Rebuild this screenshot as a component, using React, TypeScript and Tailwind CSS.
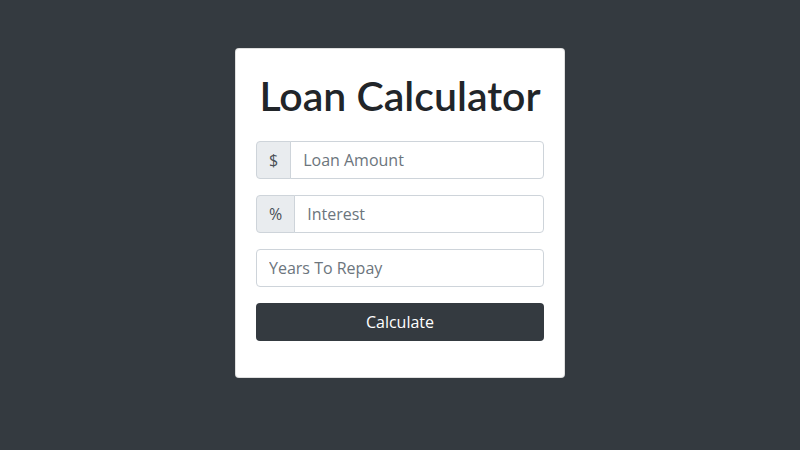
import React from "react";

const font = { fontFamily: '"Open Sans", "Noto Sans", sans-serif' };
const titleFont = { fontFamily: 'Lato, "Open Sans", sans-serif' };

function PrefixedInput({ prefix, placeholder }: { prefix: string; placeholder: string }) {
  return (
    <div className="flex h-[38px] w-full">
      <span className="flex items-center rounded-l-[4px] border border-[#ced4da] bg-[#e9ecef] px-3 text-base text-[#495057]">
        {prefix}
      </span>
      <input
        className="-ml-px min-w-0 flex-1 rounded-r-[4px] border border-[#ced4da] bg-white px-3 text-base text-[#495057] outline-none placeholder:text-[#6c757d]"
        placeholder={placeholder}
      />
    </div>
  );
}

export default function App() {
  return (
    <div className="flex h-[450px] w-full justify-center bg-[#343a40] pt-12" style={font}>
      <div className="h-[330px] w-[330px] rounded-[4px] border border-black/[0.125] bg-white p-5">
        <h1
          className="mb-[21px] whitespace-nowrap pt-[3px] text-center text-[41px] leading-[48px] font-semibold text-[#212529]"
          style={titleFont}
        >
          Loan Calculator
        </h1>
        <form className="flex flex-col gap-4" onSubmit={(e) => e.preventDefault()}>
          <PrefixedInput prefix="$" placeholder="Loan Amount" />
          <PrefixedInput prefix="%" placeholder="Interest" />
          <input
            className="h-[38px] w-full rounded-[4px] border border-[#ced4da] bg-white px-3 text-base text-[#495057] outline-none placeholder:text-[#6c757d]"
            placeholder="Years To Repay"
          />
          <button
            type="submit"
            className="h-[38px] w-full rounded-[4px] bg-[#343a40] text-base text-white"
          >
            Calculate
          </button>
        </form>
      </div>
    </div>
  );
}
